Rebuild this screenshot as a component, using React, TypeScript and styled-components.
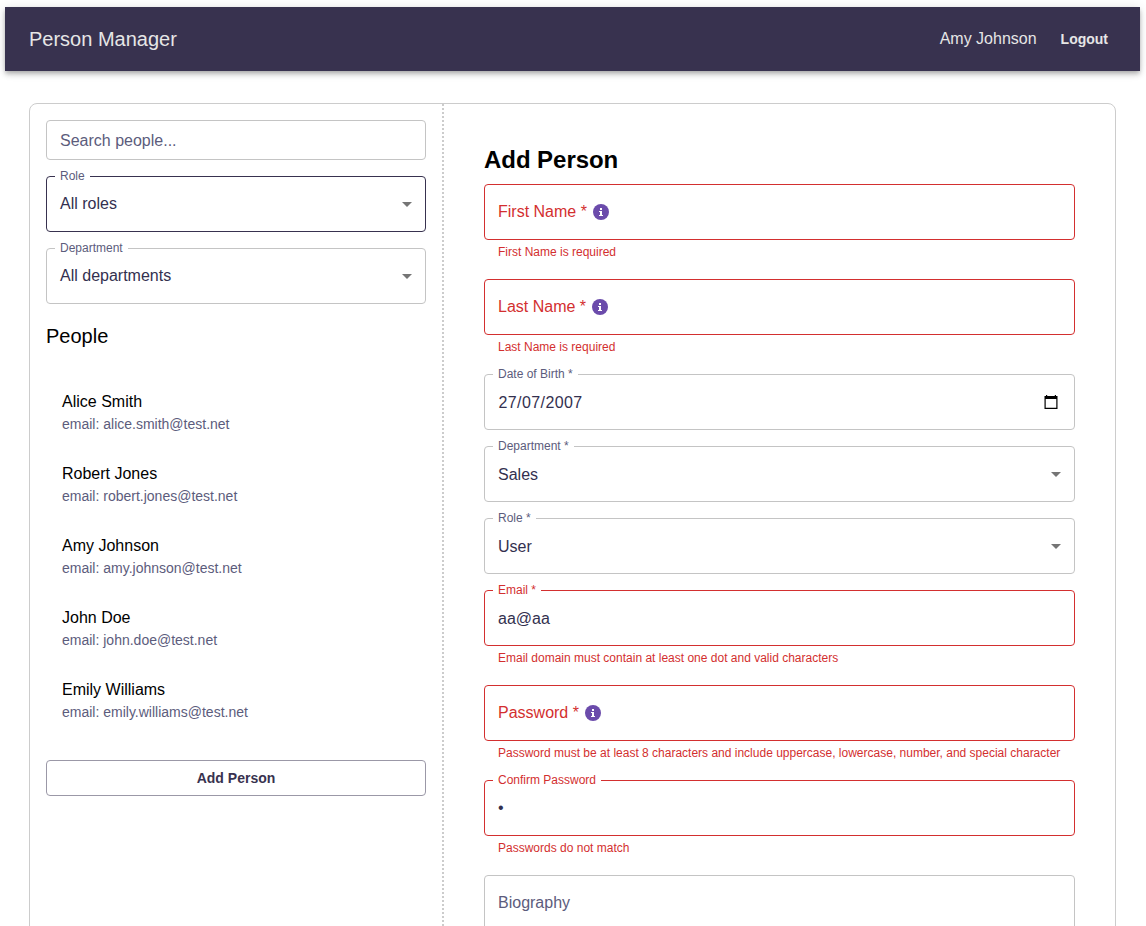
import React from "react";
import styled, { createGlobalStyle, css } from "styled-components";

const GlobalStyle = createGlobalStyle`
  *, *::before, *::after { box-sizing: border-box; }
  html, body { margin: 0; background: #fff; overflow: hidden; }
  body {
    font-family: Arial, "Liberation Sans", sans-serif;
    font-size: 16px;
    color: #000;
  }
`;

const Page = styled.div`
  height: 100vh;
  overflow: hidden;
  padding: 7px 6px 0 5px;
`;

const AppBar = styled.header`
  display: flex;
  align-items: center;
  height: 64px;
  padding: 0 24px;
  background: #38324f;
  color: #e6e6e6;
  box-shadow: 0 2px 4px -1px rgba(0, 0, 0, 0.2), 0 4px 5px 0 rgba(0, 0, 0, 0.14),
    0 1px 10px 0 rgba(0, 0, 0, 0.12);
`;

const Brand = styled.div`
  flex: 1;
  font-size: 20px;
  line-height: 32px;
`;

const UserName = styled.span`
  line-height: 24px;
`;

const LogoutButton = styled.button`
  margin-left: 16px;
  padding: 6px 8px;
  border: 0;
  background: none;
  color: inherit;
  font: bold 14px/24.5px Arial, "Liberation Sans", sans-serif;
`;

const Card = styled.main`
  display: flex;
  height: 1100px;
  margin: 32px 24px;
  border: 1px solid #ccc;
  border-radius: 8px;
`;

const Sidebar = styled.aside`
  width: 414px;
  padding: 16px;
  border-right: 2px dotted #ccc;
`;

const Filters = styled.div`
  display: flex;
  flex-direction: column;
  gap: 16px;
`;

const Content = styled.section`
  flex: 1;
  padding: 40px;
`;

const FormTitle = styled.h2`
  margin: 0 0 8px;
  font-size: 24px;
  line-height: 32px;
  letter-spacing: -0.05px;
`;

const Form = styled.form`
  display: flex;
  flex-direction: column;
  gap: 16px;
`;

type Tone = "default" | "active" | "error";

const borderColor: Record<Tone, string> = {
  default: "#c4c4c4",
  active: "#38324f",
  error: "#d32f2f",
};

const FieldBox = styled.div<{ $tone: Tone; $height: number }>`
  position: relative;
  display: flex;
  align-items: ${(p) => (p.$height > 56 ? "flex-start" : "center")};
  height: ${(p) => p.$height}px;
  padding: ${(p) => (p.$height > 56 ? "15px" : "0")} 6px 0 13px;
  border: 1px solid ${(p) => borderColor[p.$tone]};
  border-radius: 4px;
`;

const labelColor = css<{ $tone: Tone }>`
  color: ${(p) => (p.$tone === "error" ? "#d32f2f" : "#5c5c7c")};
`;

const FloatingLabel = styled.label<{ $tone: Tone }>`
  position: absolute;
  top: -9px;
  left: 8px;
  padding: 0 5px;
  background: #fff;
  font-size: 12px;
  line-height: 17px;
  ${labelColor}
`;

const InnerLabel = styled.label<{ $tone: Tone; $raised: boolean }>`
  display: flex;
  align-items: center;
  padding-bottom: ${(p) => (p.$raised ? "2px" : "0")};
  line-height: 23px;
  ${labelColor}
`;

const Value = styled.span<{ $date: boolean; $raised: boolean }>`
  flex: 1;
  padding-bottom: ${(p) => (p.$raised ? "2px" : "0")};
  padding-left: ${(p) => (p.$date ? "0.5px" : "0")};
  line-height: 23px;
  color: #33304f;
  letter-spacing: ${(p) => (p.$date ? "0.4px" : "0")};
`;

const Helper = styled.p`
  margin: 2px 14px 1px;
  font-size: 12px;
  line-height: 20px;
  white-space: nowrap;
  color: #d32f2f;
`;

const PeopleTitle = styled.h6`
  margin: 16px 0;
  font-size: 20px;
  font-weight: 400;
  line-height: 32px;
`;

const PeopleList = styled.ul`
  margin: 0 0 16px;
  padding: 8px 0;
  list-style: none;
`;

const PersonItem = styled.li`
  padding: 14px 16px;
`;

const PersonName = styled.div`
  line-height: 24px;
`;

const PersonEmail = styled.div`
  font-size: 14px;
  line-height: 20px;
  color: #5c5c7c;
`;

const AddButton = styled.button`
  width: 100%;
  height: 36px;
  border: 1px solid #9b98a7;
  border-radius: 4px;
  background: #fff;
  color: #38324f;
  font: bold 14px/24px Arial, "Liberation Sans", sans-serif;
`;

const Icon = styled.svg`
  display: block;
  flex: none;
`;

const InfoSvg = styled(Icon)`
  margin: 1px 0 0 6px;
`;

const CalendarSvg = styled(Icon)`
  margin-right: 9px;
`;

const Arrow = () => (
  <Icon width="24" height="24" viewBox="0 0 24 24" fill="#757575">
    <path d="M7 10l5 5 5-5z" />
  </Icon>
);

const Info = () => (
  <InfoSvg width="16" height="16" viewBox="0 0 16 16">
    <circle cx="8" cy="8" r="8" fill="#6b4bab" />
    <path fill="#fff" d="M7 4h2v2H7zM6 7h3v4h1v1H6v-1h1V8H6z" />
  </InfoSvg>
);

const Calendar = () => (
  <CalendarSvg width="16" height="16" viewBox="0 0 16 16">
    <path d="M3 1h1.2v1h7.6V1H13v1h1.5v13h-13V2H3zM2.7 5v8.8h10.6V5z" fillRule="evenodd" />
  </CalendarSvg>
);

interface FieldProps {
  label?: string;
  inner?: string;
  value?: string;
  tone?: Tone;
  helper?: string;
  height?: number;
  kind?: "text" | "select" | "date";
  info?: boolean;
  raised?: boolean;
}

const Field = ({
  label,
  inner,
  value,
  tone = "default",
  helper,
  height = 56,
  kind = "text",
  info = false,
  raised = false,
}: FieldProps) => (
  <div>
    <FieldBox $tone={tone} $height={height}>
      {label && <FloatingLabel $tone={tone}>{label}</FloatingLabel>}
      {inner && (
        <InnerLabel $tone={tone} $raised={raised}>
          {inner}
          {info && <Info />}
        </InnerLabel>
      )}
      {value && (
        <Value $date={kind === "date"} $raised={raised}>
          {value}
        </Value>
      )}
      {kind === "select" && <Arrow />}
      {kind === "date" && <Calendar />}
    </FieldBox>
    {helper && <Helper>{helper}</Helper>}
  </div>
);

const people = [
  ["Alice Smith", "alice.smith@test.net"],
  ["Robert Jones", "robert.jones@test.net"],
  ["Amy Johnson", "amy.johnson@test.net"],
  ["John Doe", "john.doe@test.net"],
  ["Emily Williams", "emily.williams@test.net"],
];

export default function App() {
  return (
    <Page>
      <GlobalStyle />
      <AppBar>
        <Brand>Person Manager</Brand>
        <UserName>Amy Johnson</UserName>
        <LogoutButton>Logout</LogoutButton>
      </AppBar>
      <Card>
        <Sidebar>
          <Filters>
            <Field inner="Search people..." height={40} />
            <Field label="Role" value="All roles" kind="select" tone="active" raised />
            <Field label="Department" value="All departments" kind="select" raised />
          </Filters>
          <PeopleTitle>People</PeopleTitle>
          <PeopleList>
            {people.map(([name, email]) => (
              <PersonItem key={email}>
                <PersonName>{name}</PersonName>
                <PersonEmail>email: {email}</PersonEmail>
              </PersonItem>
            ))}
          </PeopleList>
          <AddButton>Add Person</AddButton>
        </Sidebar>
        <Content>
          <FormTitle>Add Person</FormTitle>
          <Form>
            <Field inner="First Name *" info raised tone="error" helper="First Name is required" />
            <Field inner="Last Name *" info raised tone="error" helper="Last Name is required" />
            <Field label="Date of Birth *" value="27/07/2007" kind="date" />
            <Field label="Department *" value="Sales" kind="select" />
            <Field label="Role *" value="User" kind="select" />
            <Field
              label="Email *"
              value="aa@aa"
              tone="error"
              helper="Email domain must contain at least one dot and valid characters"
            />
            <Field
              inner="Password *"
              info
              raised
              tone="error"
              helper="Password must be at least 8 characters and include uppercase, lowercase, number, and special character"
            />
            <Field label="Confirm Password" value="•" raised tone="error" helper="Passwords do not match" />
            <Field inner="Biography" height={125} />
          </Form>
        </Content>
      </Card>
    </Page>
  );
}
